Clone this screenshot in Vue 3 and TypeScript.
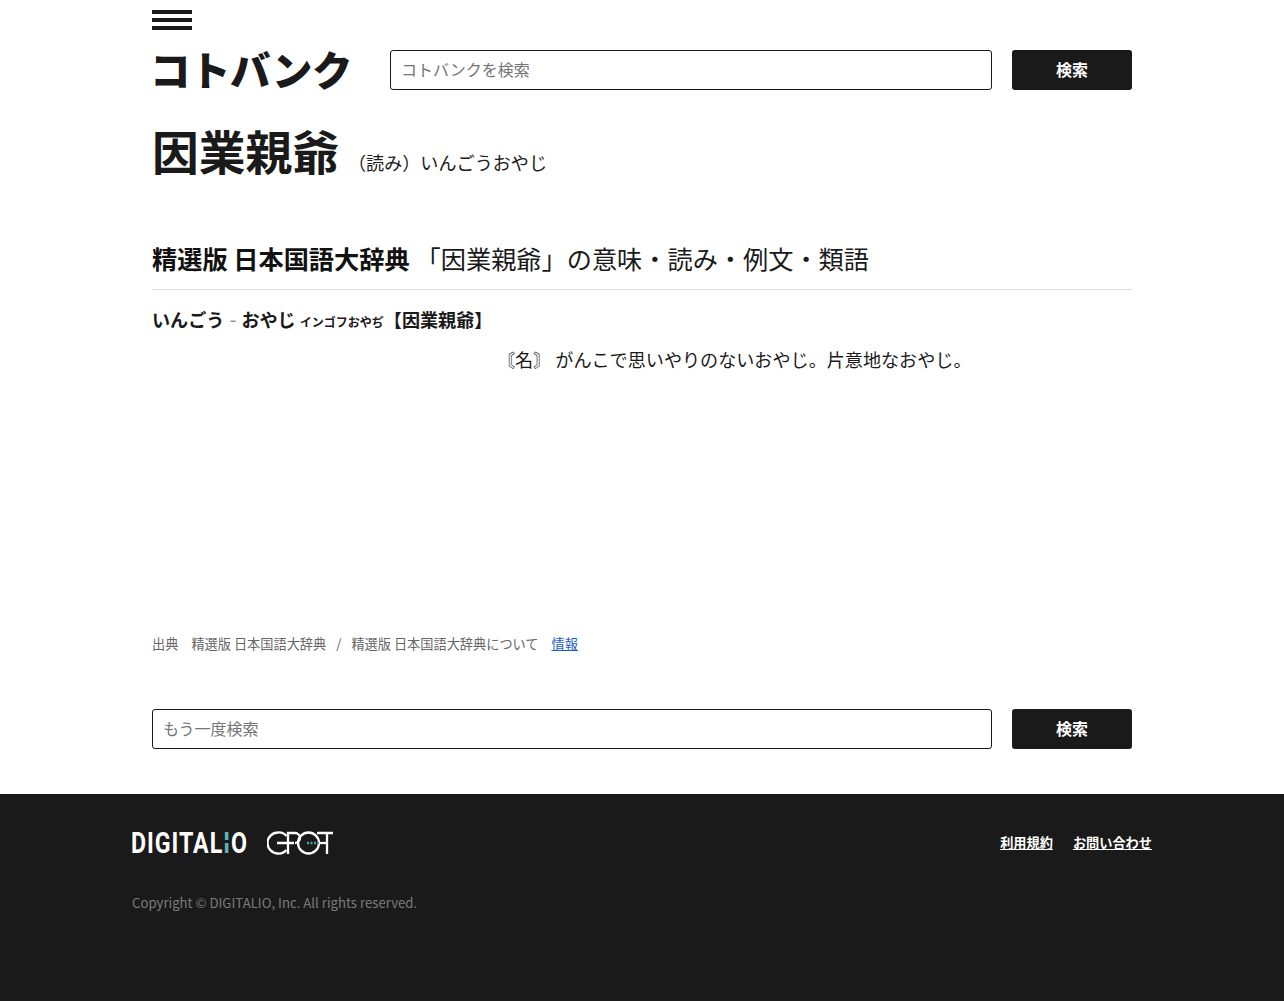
<script setup lang="ts">
const searchLabel: string = '検索'
</script>

<template>
  <div class="page">
    <header class="head">
      <button class="burger" aria-label="menu"><span></span><span></span><span></span></button>
      <div class="head-row">
        <div class="logo">コトバンク</div>
        <form class="search" @submit.prevent>
          <input class="field" type="text" placeholder="コトバンクを検索" />
          <button class="go">{{ searchLabel }}</button>
        </form>
      </div>
    </header>

    <main>
      <div class="title-row">
        <h1>因業親爺</h1>
        <span class="reading">（読み）いんごうおやじ</span>
      </div>

      <section class="entry">
        <h2><b>精選版 日本国語大辞典</b><span class="sub">「因業親爺」の意味・読み・例文・類語</span></h2>
        <h3>いんごう<span class="sep">-</span>おやじ <small>インゴフおやぢ</small>【因業親爺】</h3>
        <div class="body">
          <div class="ad"></div>
          <p>〘名〙 がんこで思いやりのないおやじ。片意地なおやじ。</p>
        </div>
      </section>

      <p class="source">
        <span>出典</span><span>精選版 日本国語大辞典</span><span class="slash">/</span><span>精選版 日本国語大辞典について</span><a href="#">情報</a>
      </p>

      <form class="search again" @submit.prevent>
        <input class="field" type="text" placeholder="もう一度検索" />
        <button class="go">{{ searchLabel }}</button>
      </form>
    </main>
  </div>

  <footer class="foot">
    <div class="foot-inner">
      <div class="foot-top">
        <div class="brands">
          <div class="digitalio"><span class="dg">DIGITAL<i>I</i>O</span></div>
          <svg class="gpot" width="68" height="24" viewBox="0 0 68 24" fill="none" stroke="#fff" stroke-width="2.300">
            <path d="M19.500 5A10.200 10.200 0 0 0 11 1.500 10.500 10.500 0 1 0 11 22.500A10.200 10.200 0 0 0 19.500 19" />
            <path d="M10 12H27M21 23V2H28A5 5 0 0 1 28 12" />
            <circle cx="41.500" cy="12" r="10.500" />
            <path d="M50 2H66M60 2V23" />
            <path d="M40 12H52" stroke="#4aa5aa" stroke-dasharray="2 1.500" />
            <path d="M52 12H60" />
          </svg>
        </div>
        <nav class="links"><a href="#">利用規約</a><a href="#">お問い合わせ</a></nav>
      </div>
      <p class="copy">Copyright © DIGITALIO, Inc. All rights reserved.</p>
    </div>
  </footer>
</template>

<style>
body { background: #fff; }
</style>

<style scoped>
.page, .foot { font-family: "Noto Sans CJK JP", "Noto Sans", sans-serif; color: #1a1a1a; }
.page { width: 980px; margin: 0 auto; }
.head { padding-top: 10px; }
.burger { display: flex; flex-direction: column; gap: 4px; width: 40px; padding: 0; border: 0; background: none; }
.burger span { display: block; height: 4px; background: #1a1a1a; }
.head-row { display: flex; align-items: center; margin-top: 20px; height: 40px; }
.logo { width: 240px; flex: none; font-size: 40.500px; font-weight: 900; line-height: 38px; letter-spacing: -.5px; white-space: nowrap; margin: 0 0 2px -2px; height: 38px; }
.search { display: flex; gap: 20px; flex: 1; }
.field { flex: 1; min-width: 0; box-sizing: border-box; height: 40px; padding: 0 10px 2px; border: 1px solid #1a1a1a; border-radius: 3px; font: inherit; font-size: 16px; color: #1a1a1a; outline: none; background: #fff; }
.field::placeholder { color: #757575; opacity: 1; }
.go { width: 120px; height: 40px; flex: none; border: 0; border-radius: 3px; padding: 0 0 2px; background: #1a1a1a; color: #fff; font: inherit; font-size: 16px; font-weight: 700; }
.title-row { display: flex; align-items: baseline; gap: 8.800px; margin-top: 26px; }
h1 { margin: 0; font-size: 46.800px; font-weight: 700; line-height: 68px; }
.reading { font-size: 18.100px; }
.entry { margin-top: 54px; }
h2 { margin: 0; padding-bottom: 11px; border-bottom: 1px solid #ddd; font-size: 25.200px; line-height: 40px; font-weight: 400; white-space: nowrap; }
h2 b { font-weight: 700; color: #111; }
.sub { margin-left: 6px; }
h3 { margin: 15px 0 0; font-size: 18.100px; line-height: 28px; font-weight: 700; white-space: nowrap; }
h3 small { font-size: 12px; }
.sep { display: inline-block; width: 17px; text-align: center; font-weight: 400; color: #888; font-size: 20px; line-height: 1; }
.body { margin-top: 7px; height: 289px; }
.ad { float: left; width: 336px; height: 289px; margin-right: 9px; }
.body p { margin: 0; font-size: 18.100px; line-height: 32px; }
.source { display: flex; margin: 0; font-size: 13.200px; line-height: 24px; color: #666; white-space: nowrap; }
.source span:nth-child(1) { margin-right: 13px; }
.source .slash { margin: 0 10px; }
.source a { margin-left: 13px; color: #1a5dc8; }
.again { margin-top: 53px; width: 980px; }
.foot { margin-top: 45px; height: 207px; background: #1a1a1a; }
.foot-inner { width: 1020px; margin: 0 auto; padding-top: 37px; }
.foot-top { display: flex; justify-content: space-between; align-items: center; height: 24px; }
.brands { display: flex; gap: 19px; align-items: center; }
.brands svg { display: block; }
.digitalio { width: 116px; height: 24px; overflow: visible; }
.dg { display: inline-block; font-family: Roboto, sans-serif; font-size: 29px; line-height: 24px; font-weight: 700; color: #fff; letter-spacing: 1.200px; white-space: nowrap; transform: translateX(-1px) scaleX(.8); transform-origin: left center; }
.dg i { position: relative; font-style: normal; color: #5fb5b0; }
.dg i::after { content: ""; position: absolute; left: 0; right: 0; top: 14px; height: 3px; background: #1a1a1a; }
.links { display: flex; gap: 20px; font-size: 13.200px; font-weight: 700; margin-bottom: 2px; }
.links a { color: #fff; }
.copy { margin: 38px 0 0; font-size: 13.200px; line-height: 20px; color: #7a7a7a; }
</style>
